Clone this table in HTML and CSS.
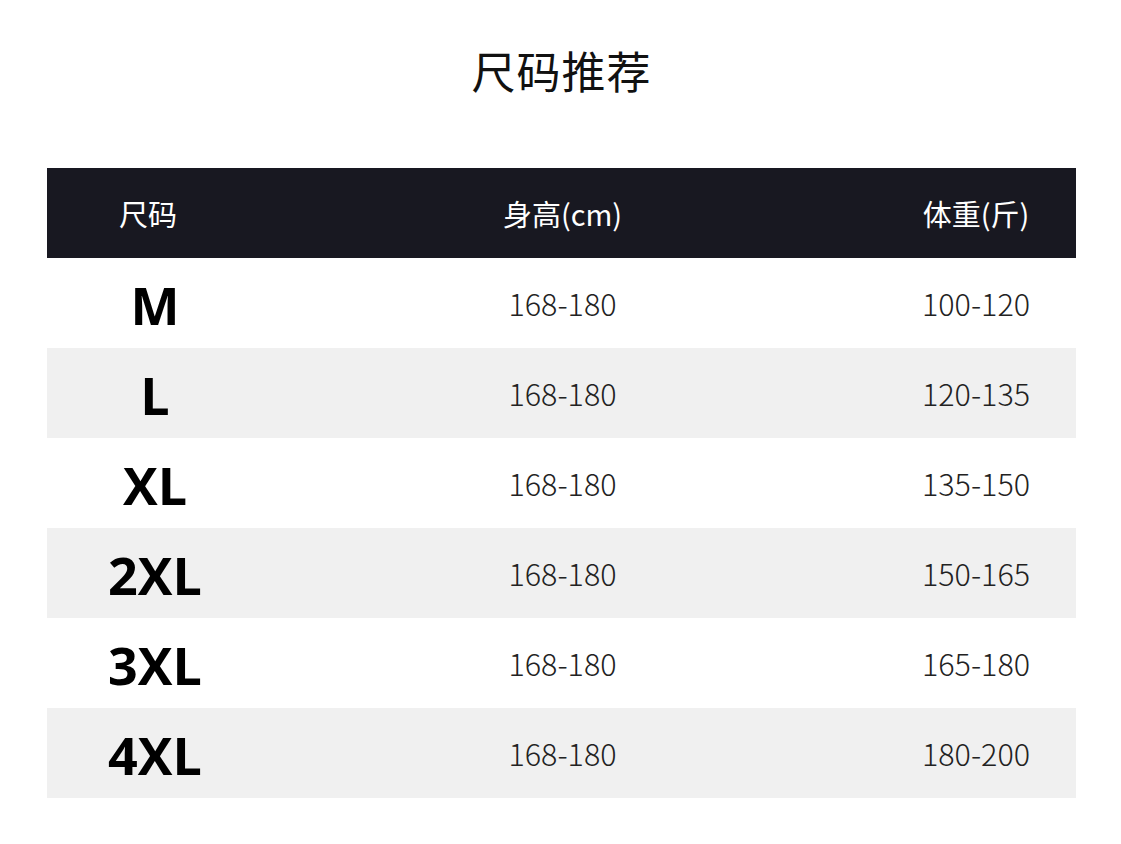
FILE: index.html
```html
<!DOCTYPE html>
<html lang="zh-CN">
<head>
<meta charset="utf-8">
<title>尺码推荐</title>
<link rel="stylesheet" href="styles.css">
</head>
<body>
<div class="page">
  <h1 class="title">尺码推荐</h1>
  <div class="table">
    <div class="row head">
      <div class="cell">尺码</div>
      <div class="cell">身高(cm)</div>
      <div class="cell">体重(斤)</div>
    </div>
    <div class="row">
      <div class="cell size">M</div>
      <div class="cell num">168-180</div>
      <div class="cell num">100-120</div>
    </div>
    <div class="row alt">
      <div class="cell size">L</div>
      <div class="cell num">168-180</div>
      <div class="cell num">120-135</div>
    </div>
    <div class="row">
      <div class="cell size">XL</div>
      <div class="cell num">168-180</div>
      <div class="cell num">135-150</div>
    </div>
    <div class="row alt">
      <div class="cell size">2XL</div>
      <div class="cell num">168-180</div>
      <div class="cell num">150-165</div>
    </div>
    <div class="row">
      <div class="cell size">3XL</div>
      <div class="cell num">168-180</div>
      <div class="cell num">165-180</div>
    </div>
    <div class="row alt">
      <div class="cell size">4XL</div>
      <div class="cell num">168-180</div>
      <div class="cell num">180-200</div>
    </div>
  </div>
</div>
</body>
</html>
```
FILE: styles.css
```css
html, body {
  margin: 0;
  padding: 0;
  background: #ffffff;
}

.page {
  width: 1121px;
  padding: 48px 0 0 47px;
  box-sizing: border-box;
  font-family: "Noto Sans CJK SC", "Noto Sans", sans-serif;
}

.title {
  width: 1029px;
  margin: 0 0 76px 0;
  font-size: 44px;
  line-height: 44px;
  height: 44px;
  font-weight: 400;
  color: #111111;
  text-align: center;
  letter-spacing: 1px;
}

.table {
  width: 1029px;
  display: flex;
  flex-direction: column;
}

.row {
  display: grid;
  grid-template-columns: 202px 1fr 200px;
  height: 90px;
  align-items: center;
  background: #ffffff;
}

.row.alt {
  background: #f0f0f0;
}

.row.head {
  background: #181821;
  color: #ffffff;
  font-size: 29px;
  font-weight: 400;
}

.cell {
  text-align: center;
}

.size {
  font-family: "Open Sans", "Noto Sans", sans-serif;
  font-weight: 700;
  font-size: 52px;
  color: #000000;
  line-height: 1;
  padding: 4px 0 0 14px;
}

.num {
  font-size: 30.5px;
  font-weight: 300;
  color: #222222;
  line-height: 1;
}
```
